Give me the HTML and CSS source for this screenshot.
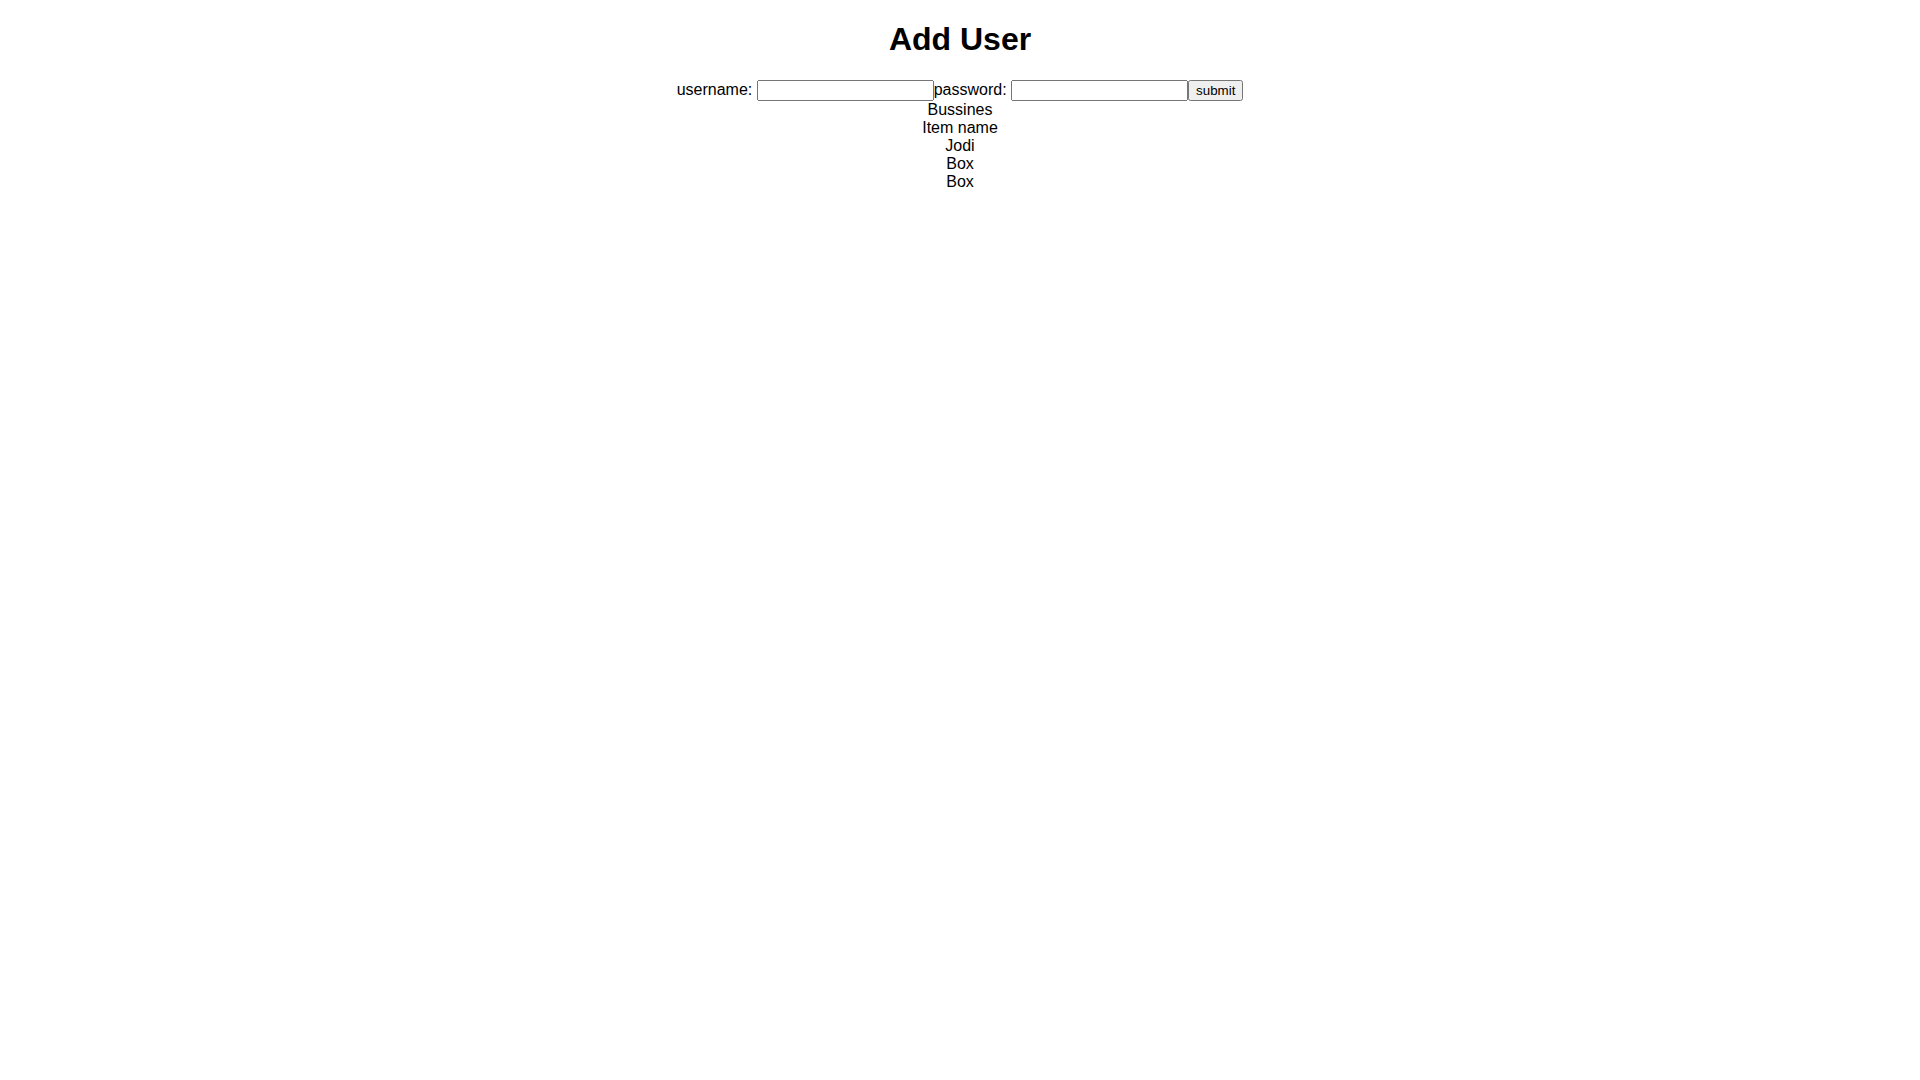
FILE: index.html
```html
<!DOCTYPE html>
<html>
<head>
<meta charset="utf-8">
<title>Add User</title>
<link rel="stylesheet" href="styles.css">
</head>
<body>
<div class="page">
<h1 class="title">Add User</h1>
<form class="user-form">
<label class="field-label">username: <input class="field" type="text" name="username"></label><label class="field-label">password: <input class="field" type="password" name="password"></label><button class="submit-btn" type="button">submit</button>
</form>
<div class="item-list">
<div class="item">Bussines</div>
<div class="item">Item name</div>
<div class="item">Jodi</div>
<div class="item">Box</div>
<div class="item">Box</div>
</div>
</div>
</body>
</html>
```

FILE: styles.css
```css
body {
  margin: 0 8px 8px;
  font-family: "Liberation Sans", Arial, sans-serif;
  font-size: 16px;
  color: #000;
  background: #fff;
}

.page {
  text-align: center;
}

.title {
  font-size: 32px;
  font-weight: bold;
  margin: 21.44px 0;
}

.user-form {
  margin: 0;
}

.field {
  box-sizing: border-box;
  width: 177px;
  height: 21px;
  font-family: "Liberation Sans", Arial, sans-serif;
  font-size: 13.333px;
}

.submit-btn {
  box-sizing: border-box;
  height: 21px;
  font-family: "Liberation Sans", Arial, sans-serif;
  font-size: 13.333px;
}

.item-list {
  margin: 0;
}
```
